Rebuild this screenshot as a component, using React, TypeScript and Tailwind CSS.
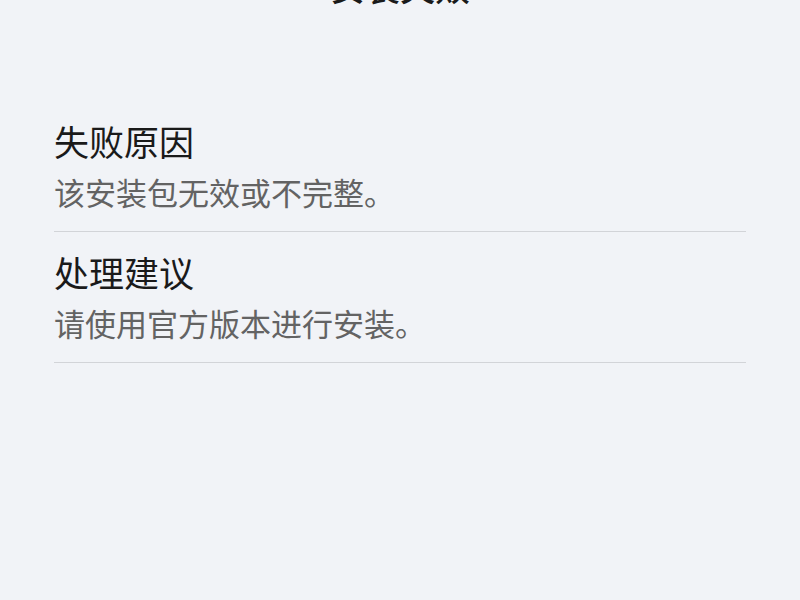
interface DetailItem {
    title: string;
    content: string;
}

const details: DetailItem[] = [
    { title: '失败原因', content: '该安装包无效或不完整。' },
    { title: '处理建议', content: '请使用官方版本进行安装。' },
];

export default function App() {
    return (
        <main className="min-h-screen overflow-hidden bg-[#f1f3f7] px-[54px] font-['Noto_Sans_CJK_SC',sans-serif]">
            <h1 className="-mt-[38px] text-center text-[35px] leading-[48px] font-medium text-[#1a1a1a]">安装失败</h1>

            <dl className="mt-[108px]">
                {details.map((item) => (
                    <div key={item.title} className="mb-[17px] border-b border-[#d2d4d8] pb-[17px]">
                        <dt className="text-[35px] leading-[46px] text-[#1a1a1a]">{item.title}</dt>
                        <dd className="mt-[6px] text-[31px] leading-[44px] text-[#636363]">{item.content}</dd>
                    </div>
                ))}
            </dl>
        </main>
    );
}
